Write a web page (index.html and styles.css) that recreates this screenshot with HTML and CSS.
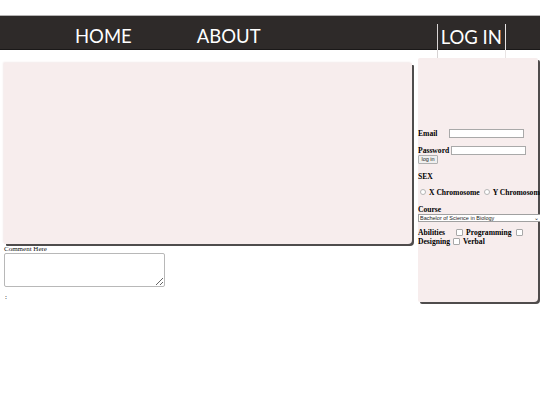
FILE: index.html
```html
<!DOCTYPE html>
<html>
<head>
<meta charset="utf-8">
<link rel="stylesheet" href="styles.css">
</head>
<body>
<div class="header">
  <ul class="nav">
    <li class="nav-item home">HOME</li>
    <li class="nav-item about">ABOUT</li>
    <li class="nav-item login">LOG IN</li>
  </ul>
</div>
<div class="content">
  <div class="main-col">
    <div class="main-box"></div>
    <div class="comment-label">Comment Here</div>
    <textarea class="comment"></textarea>
    <div class="colon">:</div>
  </div>
  <div class="side-box">
    <div class="row email-row"><b>Email</b><input class="txt email" type="text"></div>
    <div class="row pass-row"><b>Password</b><input class="txt pass" type="password"></div>
    <div class="btn-row"><button class="btn">log in</button></div>
    <div class="row sex"><b>SEX</b></div>
    <div class="row radio-row"><span class="radio r1"></span><b>X Chromosome</b><span class="radio r2"></span><b>Y Chromosome</b></div>
    <div class="row course"><b>Course</b></div>
    <div class="select-row"><div class="select"><span>Bachelor of Science in Biology</span><span class="caret">&#8964;</span></div></div>
    <div class="row ab-row"><b>Abilities</b><span class="check c1"></span><b>Programming</b><span class="check c2"></span></div>
    <div class="row ab-row2"><b>Designing</b><span class="check c3"></span><b>Verbal</b></div>
  </div>
</div>
</body>
</html>
```
FILE: styles.css
```css
html, body {
  margin: 0;
  padding: 0;
  background: #ffffff;
  width: 540px;
  height: 405px;
  overflow: hidden;
}
body {
  font-family: "Liberation Serif", serif;
  padding-top: 15px;
}
.header {
  height: 33px;
  background: #2e2a29;
  border-top: 1px solid #b5b3b3;
  border-bottom: 1px solid #1a1818;
}
.nav {
  list-style: none;
  margin: 0;
  padding: 0;
  display: flex;
  height: 33px;
}
.nav-item {
  font-family: "Lato", "Open Sans", sans-serif;
  font-size: 18.5px;
  color: #ffffff;
  line-height: 33px;
  flex-shrink: 0;
}
.home { margin-left: 75px; margin-top: 4px; }
.about { margin-left: 65px; margin-top: 4px; }
.login {
  margin-left: 176px;
  margin-top: 8px;
  height: 37px;
  line-height: 27px;
  padding: 0 3px 0 3px;
  border-left: 1px solid #d8d4d4;
  border-right: 1px solid #e8e4e4;
}
.content {
  display: flex;
  align-items: flex-start;
  padding-top: 8px;
}
.main-col {
  margin-left: 4px;
  margin-top: 5px;
  width: 408px;
  flex-shrink: 0;
}
.main-box {
  height: 181px;
  background: #f7eded;
  border-radius: 1px 1px 4px 1px;
  box-shadow: 2px 2px 0 #4f4c4c, -1px -1px 2px #f3eaea;
}
.comment-label {
  font-size: 7px;
  line-height: 8px;
  margin-top: 1px;
  color: #111;
}
.comment {
  display: block;
  width: 161px;
  height: 34px;
  box-sizing: border-box;
  border: 1px solid #b8b8b8;
  border-radius: 2px;
  background: #fff;
  resize: both;
  margin: 0;
}
.colon {
  font-size: 7px;
  line-height: 8px;
  margin-top: 6px;
  margin-left: 1px;
  color: #000;
}
.side-box {
  margin-left: 6px;
  width: 120px;
  height: 244px;
  flex-shrink: 0;
  background: #f7eded;
  border-radius: 2px 2px 4px 2px;
  box-shadow: 2px 2px 0 #4f4c4c;
  padding-top: 70px;
  box-sizing: border-box;
  font-size: 7.6px;
  color: #000;
  white-space: nowrap;
}
.side-box b { color: #000; flex-shrink: 0; }
.row {
  display: flex;
  align-items: center;
  height: 10px;
}
.txt {
  height: 9px;
  box-sizing: border-box;
  border: 1px solid #a9a9a9;
  background: #fff;
  padding: 0;
  margin: 0;
  flex-shrink: 0;
}
.email { width: 75px; margin-left: 12px; }
.pass-row { margin-top: 7px; }
.pass { width: 75px; margin-left: 2px; }
.btn-row { height: 9px; display: flex; }
.btn {
  font-family: "Liberation Sans", sans-serif;
  font-size: 5.5px;
  height: 9px;
  width: 20px;
  padding: 0;
  margin: 0;
  border: 1px solid #b0b0b0;
  border-radius: 1px;
  background: #efefef;
  color: #222;
  line-height: 7px;
}
.sex { margin-top: 7px; }
.radio-row { margin-top: 6px; }
.radio {
  display: inline-block;
  flex-shrink: 0;
  width: 4px;
  height: 4px;
  border: 1px solid #b5b5b5;
  border-radius: 50%;
  background: #fff;
}
.r1 { margin: 0 3px 0 2px; }
.r2 { margin: 0 3px 0 4px; }
.course { margin-top: 7px; }
.select-row { height: 8px; }
.select {
  display: flex;
  justify-content: space-between;
  align-items: center;
  width: 123px;
  height: 8px;
  box-sizing: border-box;
  border: 1px solid #a0a0a0;
  background: #fff;
  font-family: "Liberation Sans", sans-serif;
  font-size: 5.5px;
  padding-left: 1px;
  color: #222;
}
.caret { font-size: 6px; line-height: 4px; padding-right: 1px; }
.ab-row { margin-top: 6px; height: 9px; }
.ab-row2 { height: 9px; }
.check {
  display: inline-block;
  flex-shrink: 0;
  width: 5px;
  height: 5px;
  border: 1px solid #a8a8a8;
  border-radius: 1px;
  background: #fff;
}
.c1 { margin: 0 3px 0 11px; }
.c2 { margin-left: 5px; }
.c3 { margin: 0 3px 0 3px; }
```
